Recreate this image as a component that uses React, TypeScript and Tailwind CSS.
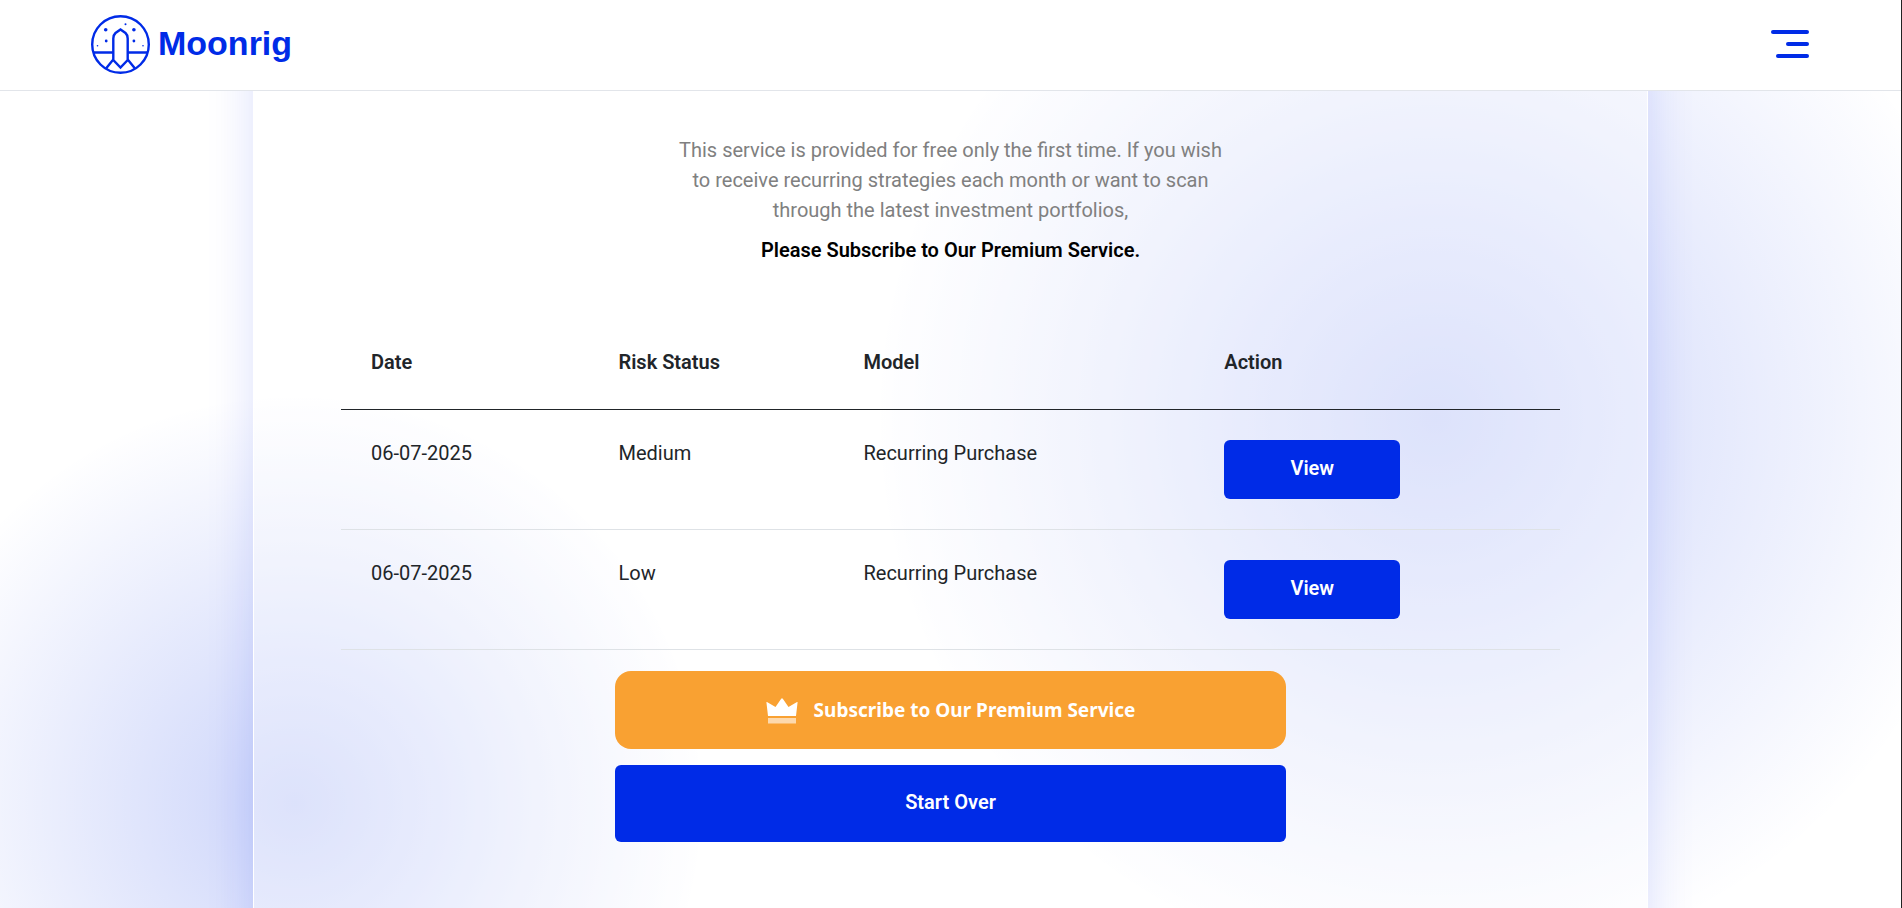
import React from 'react';

const rows = [
  { date: '06-07-2025', risk: 'Medium', model: 'Recurring Purchase' },
  { date: '06-07-2025', risk: 'Low', model: 'Recurring Purchase' },
];

function LogoMark() {
  return (
    <svg
      viewBox="0 0 60 60"
      className="h-[60px] w-[60px]"
      fill="none"
      stroke="#002be7"
      strokeWidth="2.4"
      aria-hidden="true"
    >
      <circle cx="30.5" cy="30.5" r="28.3" />
      <path d="M3 38.5H23.3M37.7 38.5H58" />
      <path d="M23.3 46V24.5Q23.3 21 25.5 19L30.5 15.5L35.5 19Q37.7 21 37.7 24.5V46L30.5 53.5Z" />
      <path d="M23.3 45.5L16 54.5M37.7 45.5L45 54.5" />
      <g fill="#002be7" stroke="none">
        <circle cx="15.7" cy="15.7" r="1.8" />
        <circle cx="43.9" cy="15.7" r="1.8" />
        <circle cx="16.2" cy="27" r="1.4" />
        <circle cx="43.9" cy="27" r="1.4" />
        <circle cx="35.5" cy="10.3" r="1" />
        <circle cx="7.5" cy="31.7" r="0.8" />
        <circle cx="53" cy="31.7" r="0.8" />
      </g>
    </svg>
  );
}

function Crown() {
  return (
    <svg viewBox="0 0 32 28" className="h-7 w-8" fill="#fff" aria-hidden="true">
      <path d="M0.5 7Q0 5.6 1.4 6.2L9.5 11L15.2 2.8Q16 1.8 16.8 2.8L22.5 11L30.6 6.2Q32 5.6 31.5 7L30 20H2Z" />
      <path d="M2 22H30V27.5H2Z" opacity="0.6" />
    </svg>
  );
}

function App() {
  return (
    <div className="flex min-h-screen flex-col border-r border-[#222] bg-white bg-[radial-gradient(circle_410px_at_15.5%_88.5%,rgba(0,43,231,0.2),rgba(0,43,231,0)),radial-gradient(circle_560px_at_75.5%_46%,rgba(0,43,231,0.2),rgba(0,43,231,0))] font-[Roboto,'Liberation_Sans',sans-serif] text-[20px] leading-[30px] text-[#212529]">
      {/* Header */}
      <header className="relative z-10 flex h-[91px] items-center justify-between border-b border-[#e2e5ea] bg-white pr-[92px] pb-[2px] pl-[90px]">
        <a href="#" className="flex items-center gap-2 text-[#002be7]">
          <LogoMark />
          <span className="pb-[2px] font-['Liberation_Sans',Arial,sans-serif] text-[34px] font-bold">
            Moonrig
          </span>
        </a>
        <button type="button" aria-label="Open menu" className="flex flex-col items-end gap-2">
          <span className="h-1 w-[38px] rounded-full bg-[#002be7]"></span>
          <span className="h-1 w-[23px] rounded-full bg-[#002be7]"></span>
          <span className="h-1 w-[33px] rounded-full bg-[#002be7]"></span>
        </button>
      </header>

      {/* Results card */}
      <main className="flex flex-1 justify-center overflow-hidden">
        <section className="-my-20 w-full max-w-[1395px] border border-white bg-white/32 px-[87px] pt-[123px] pb-20 shadow-[0_0_45px_rgba(0,43,231,0.14)]">
          <p className="mx-auto max-w-[552px] text-center text-[#808080]">
            This service is provided for free only the first time. If you wish to receive recurring
            strategies each month or want to scan through the latest investment portfolios,
          </p>
          <p className="mt-[10px] text-center font-semibold text-black">
            Please Subscribe to Our Premium Service.
          </p>

          <table className="mt-[54px] w-full table-fixed text-left">
            <thead>
              <tr className="border-b border-[#212529]">
                <th className="w-[20.3%] px-[30px] pt-7 pb-8 font-semibold">Date</th>
                <th className="w-[20.1%] px-[30px] pt-7 pb-8 font-semibold">Risk Status</th>
                <th className="w-[29.6%] px-[30px] pt-7 pb-8 font-semibold">Model</th>
                <th className="w-[30%] px-[30px] pt-7 pb-8 font-semibold">Action</th>
              </tr>
            </thead>
            <tbody>
              {rows.map((row, index) => (
                <tr key={index} className="border-b border-[#dee2e6] align-top">
                  <td className="px-[30px] pt-7">{row.date}</td>
                  <td className="px-[30px] pt-7">{row.risk}</td>
                  <td className="px-[30px] pt-7">{row.model}</td>
                  <td className="p-[30px]">
                    <button
                      type="button"
                      className="block h-[59px] w-44 rounded-md bg-[#002be7] pb-1 font-semibold text-white"
                    >
                      View
                    </button>
                  </td>
                </tr>
              ))}
            </tbody>
          </table>

          <div className="mx-auto mt-[21px] flex w-[55%] flex-col gap-4">
            <button
              type="button"
              className="flex h-[78px] items-center justify-center gap-4 rounded-2xl bg-[#f9a132] font-['Noto_Sans','Open_Sans',sans-serif] text-[19px] font-bold text-white"
            >
              <Crown />
              Subscribe to Our Premium Service
            </button>
            <button type="button" className="h-[77px] rounded-md bg-[#002be7] pb-1 font-semibold text-white">
              Start Over
            </button>
          </div>
        </section>
      </main>
    </div>
  );
}

export default App;
